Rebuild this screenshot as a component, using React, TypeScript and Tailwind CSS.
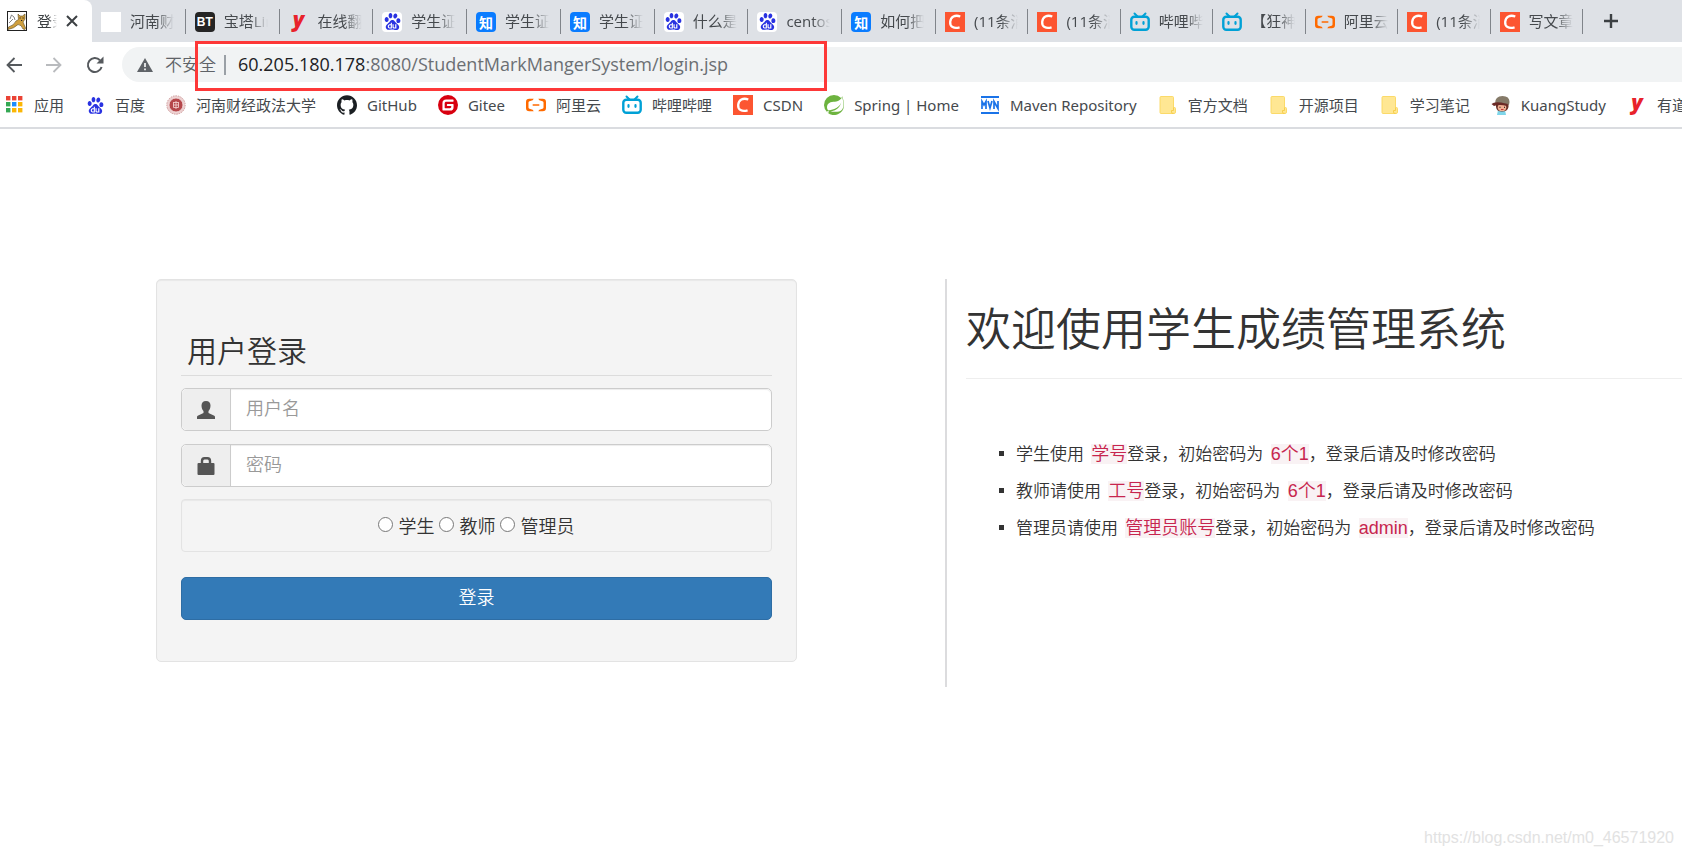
import type { ReactNode } from "react";
import { SiAlibabacloud, SiBaidu, SiGitee, SiGithub, SiSpring } from "react-icons/si";

const sans = "font-['Open_Sans','Noto_Sans_CJK_SC',sans-serif]";

function Tomcat() {
  return (
    <svg viewBox="0 0 20 20" className="size-5" aria-hidden="true">
      <rect x="0.5" y="0.5" width="19" height="19" fill="#fff" stroke="#222" />
      <path d="M3 8 L4.500 4 L7 6 L8 9 M2 12 L6 8" fill="none" stroke="#666" strokeWidth="0.800" />
      <path d="M1 18.500 L1.500 16 Q7 14.500 9 10 L11.500 8.500 L11 3 L13 5 H15.500 L18 3 V8 L16 11 L18.500 17 L18 18.500 L16 18 Q14.500 13.500 11 13.500 Q7 17.500 1 18.500 z" fill="#cf9f3e" stroke="#5c4a20" strokeWidth="0.600" />
      <path d="M12.500 7 h1.200 M15.500 7 h1.200 M14 9.500 h1.200" stroke="#222" />
    </svg>
  );
}

function BaiduTile() {
  return (
    <span className="flex size-5 items-center justify-center rounded-sm bg-white text-[17px] text-[#2932e1]">
      <SiBaidu />
    </span>
  );
}

function Zhihu() {
  return (
    <span className="flex size-5 items-center justify-center rounded-sm bg-[#0a7cff] font-['Noto_Sans_CJK_SC',sans-serif] text-[14px] leading-5 font-bold text-white">
      知
    </span>
  );
}

function Csdn() {
  return (
    <svg viewBox="0 0 20 20" className="size-5" aria-hidden="true">
      <rect width="20" height="20" fill="#fc5531" />
      <path d="M15.300 4.500 C10 2.500 5.600 4.900 5.200 9.800 C4.800 14.800 8.800 17 14.600 15.300" fill="none" stroke="#fff" strokeWidth="2.300" />
    </svg>
  );
}

function Bili() {
  return (
    <svg viewBox="0 0 20 20" className="size-5" fill="none" stroke="#00a1d6" strokeLinecap="round" aria-hidden="true">
      <path d="M4.500 1.500 L7.500 4.500 M15.500 1.500 L12.500 4.500" strokeWidth="2" />
      <rect x="1.300" y="4.800" width="17.400" height="13" rx="3" strokeWidth="2.400" />
      <path d="M6.500 10.200 v1.600 M13.500 10.200 v1.600" strokeWidth="2.200" />
    </svg>
  );
}

function Bt() {
  return (
    <span className="flex size-5 items-center justify-center rounded-sm bg-[#252525] font-['Liberation_Sans',sans-serif] text-[12px] leading-5 font-bold text-white">
      BT
    </span>
  );
}

function Youdao() {
  return (
    <span className="flex size-5 items-center justify-center pb-[6px] font-['Open_Sans',sans-serif] text-[21px] leading-5 font-extrabold text-[#e8222b] italic">
      y
    </span>
  );
}

function Aliyun() {
  return <SiAlibabacloud className="size-5 text-[#ff6a00]" />;
}

function Blank() {
  return <span className="block size-5 bg-white" />;
}

function AppsGrid() {
  const colors = ["#ea4335", "#ea4335", "#ea4335", "#34a853", "#1a8cff", "#fbb605", "#34a853", "#fbb605", "#fbb605"];
  return (
    <svg viewBox="0 0 20 20" className="size-5" aria-hidden="true">
      {colors.map((c, i) => (
        <rect key={i} x={2 + (i % 3) * 6} y={1 + Math.floor(i / 3) * 6} width="4.400" height="4.400" fill={c} />
      ))}
    </svg>
  );
}

function Seal() {
  return (
    <svg viewBox="0 0 20 20" className="size-5" fill="none" aria-hidden="true">
      <circle cx="10" cy="10" r="9.200" fill="#ecd0d0" stroke="#cf9a9a" strokeDasharray="1.500 1" />
      <circle cx="10" cy="10" r="7" fill="#b5474b" stroke="#f6e4e4" strokeWidth="0.800" />
      <path d="M7 7.500 h6 M7.500 7.500 v5 h5 v-5 M7 10 h6 M10 6 v8" stroke="#f2c9c9" strokeWidth="0.900" />
    </svg>
  );
}

function Maven() {
  return (
    <svg viewBox="0 0 20 20" className="size-5" fill="none" stroke="#1a73e8" aria-hidden="true">
      <path d="M1 2 h18 M1 18 h18" strokeWidth="2" />
      <path d="M2 14 V6.500 L4 10 L6 6.500 V14 M8 6 L10 13 L12 6 M14 14 V6.500 L18 13.500 V6" strokeWidth="1.700" />
    </svg>
  );
}

function Folder() {
  return (
    <svg viewBox="0 0 20 20" className="size-5" aria-hidden="true">
      <path d="M3 1.500 h11.500 a1 1 0 0 1 1 1 V12.500 h1 a1 1 0 0 1 1 1 V17 a1.500 1.500 0 0 1 -1.500 1.500 H3 a1 1 0 0 1 -1 -1 V2.500 a1 1 0 0 1 1 -1 z" fill="#ffe793" stroke="#fbd75e" strokeWidth="0.900" />
      <path d="M15.500 12.500 v3 h-2 v1.500 a1.500 1.500 0 0 0 2 1.300" fill="none" stroke="#f5cb45" strokeWidth="0.900" />
    </svg>
  );
}

function Kid() {
  return (
    <svg viewBox="0 0 20 20" className="size-5" aria-hidden="true">
      <path d="M7 15 h7 l1 5 H6 z" fill="#7fd6ea" />
      <path d="M5 9 h12.500 v3 q-1 4.500 -6.500 4.500 T5 12 z" fill="#6b3026" />
      <ellipse cx="11" cy="12.400" rx="4.300" ry="3.600" fill="#f2b093" />
      <path d="M4 8.500 Q4 1 11.500 1 Q18.500 1 18.500 7 L18 10 L9 8 z" fill="#857a68" />
      <path d="M0.500 9 Q3 6.500 10 7.500 L17 9 L16 11 Q8 9 3 11 z" fill="#6b2a26" />
      <path d="M9 11.700 v1.200 M13.500 11.700 v1.200" stroke="#222" />
      <path d="M10 14.500 h2.500" stroke="#c03a3a" />
    </svg>
  );
}

type Item = { icon: ReactNode; label: string };

const wideTabs: Item[] = [
  { icon: <Blank />, label: "河南财经" },
  { icon: <Bt />, label: "宝塔Linux" },
  { icon: <Youdao />, label: "在线翻译" },
  { icon: <BaiduTile />, label: "学生证号" },
  { icon: <Zhihu />, label: "学生证号" },
  { icon: <Zhihu />, label: "学生证号" },
  { icon: <BaiduTile />, label: "什么是证" },
  { icon: <BaiduTile />, label: "centos7" },
  { icon: <Zhihu />, label: "如何把一" },
];

const narrowTabs: Item[] = [
  { icon: <Csdn />, label: "(11条消息" },
  { icon: <Csdn />, label: "(11条消息" },
  { icon: <Bili />, label: "哔哩哔哩" },
  { icon: <Bili />, label: "【狂神说" },
  { icon: <Aliyun />, label: "阿里云登" },
  { icon: <Csdn />, label: "(11条消息" },
  { icon: <Csdn />, label: "写文章-" },
];

const bookmarks: Item[] = [
  { icon: <AppsGrid />, label: "应用" },
  { icon: <BaiduTile />, label: "百度" },
  { icon: <Seal />, label: "河南财经政法大学" },
  { icon: <SiGithub className="size-5 text-[#1b1f23]" />, label: "GitHub" },
  { icon: <SiGitee className="size-5 text-[#d8000f]" />, label: "Gitee" },
  { icon: <Aliyun />, label: "阿里云" },
  { icon: <Bili />, label: "哔哩哔哩" },
  { icon: <Csdn />, label: "CSDN" },
  { icon: <SiSpring className="size-5 text-[#6db33f]" />, label: "Spring | Home" },
  { icon: <Maven />, label: "Maven Repository" },
  { icon: <Folder />, label: "官方文档" },
  { icon: <Folder />, label: "开源项目" },
  { icon: <Folder />, label: "学习笔记" },
  { icon: <Kid />, label: "KuangStudy" },
  { icon: <Youdao />, label: "有道翻译" },
];

function Tab({ icon, label }: Item) {
  return (
    <button type="button" className="flex h-[25px] min-w-0 items-center gap-[9px] border-r border-[#80848a] pr-2 pl-[9px] text-left">
      <span className="shrink-0">{icon}</span>
      <span className="w-11 overflow-hidden pb-px text-[15px] leading-6 whitespace-nowrap text-[#45494d] [mask-image:linear-gradient(to_right,#000_60%,transparent)]">
        {label}
      </span>
    </button>
  );
}

function TabStrip() {
  return (
    <div className="flex h-[42px] items-start bg-[#dee1e6]">
      <div className="flex h-[42px] w-[92px] shrink-0 items-center rounded-tr-lg bg-white pl-[7px]">
        <Tomcat />
        <span className="ml-[10px] w-5 overflow-hidden text-[15px] leading-6 whitespace-nowrap text-[#3c4043] [mask-image:linear-gradient(to_right,#000_60%,transparent)]">
          登录
        </span>
        <button type="button" aria-label="关闭标签页" className="ml-[9px]">
          <svg viewBox="0 0 12 12" className="size-3" fill="none" stroke="#3c4043" strokeWidth="2">
            <path d="M1 1 L11 11 M11 1 L1 11" />
          </svg>
        </button>
      </div>
      <div className="grid w-[844px] grid-cols-9 pt-[9px]">
        {wideTabs.map((t, i) => (
          <Tab key={i} {...t} />
        ))}
      </div>
      <div className="grid w-[647px] grid-cols-7 pt-[9px]">
        {narrowTabs.map((t, i) => (
          <Tab key={i} {...t} />
        ))}
      </div>
      <button type="button" aria-label="新标签页" className="flex h-[42px] items-center pl-5">
        <svg viewBox="0 0 16 16" className="size-4" stroke="#3c4043" strokeWidth="2.400">
          <path d="M8 1 V15 M1 8 H15" />
        </svg>
      </button>
    </div>
  );
}

function Toolbar() {
  return (
    <div className="relative flex h-[45px] items-center">
      <div className="flex w-[122px] shrink-0 items-center gap-6 pl-[6px]">
        <button type="button" aria-label="后退">
          <svg viewBox="0 0 16 16" className="size-4" fill="none" stroke="#55595d" strokeWidth="1.800">
            <path d="M16 8 H1.500 M8.500 1 L1.500 8 L8.500 15" />
          </svg>
        </button>
        <button type="button" aria-label="前进">
          <svg viewBox="0 0 16 16" className="size-4" fill="none" stroke="#b9bbbe" strokeWidth="1.800">
            <path d="M0 8 H14.500 M7.500 1 L14.500 8 L7.500 15" />
          </svg>
        </button>
        <button type="button" aria-label="重新加载">
          <svg viewBox="0 0 18 18" className="size-[18px]" fill="none" stroke="#55595d" strokeWidth="2">
            <path d="M15.600 11 A7 7 0 1 1 14 4.200" />
            <path d="M17.500 0.500 V7.500 H10.500 z" fill="#55595d" stroke="none" />
          </svg>
        </button>
      </div>
      <div className="flex h-[35px] flex-1 items-center rounded-l-full bg-[#f1f3f4] pl-[15px]">
        <svg viewBox="0 0 16 14" className="h-[14px] w-4" aria-hidden="true">
          <path d="M8 0 L16 14 H0 z" fill="#5f6368" />
          <path d="M8 5 V9 M8 10.500 V12.200" stroke="#fff" strokeWidth="1.600" />
        </svg>
        <span className="ml-3 text-[17px] font-[350] text-[#5f6368]">不安全</span>
        <span className="mr-3 ml-2 h-5 w-[2px] bg-[#9aa0a6]" />
        <p className="text-[18px] whitespace-nowrap text-[#6b6f73]">
          <span className="text-[#202124]">60.205.180.178</span>:8080/StudentMarkMangerSystem/login.jsp
        </p>
      </div>
      <div className="absolute -top-px left-[195px] h-[50px] w-[632px] border-3 border-[#fd3838]" />
    </div>
  );
}

function Bookmarks() {
  return (
    <nav className="flex h-[42px] items-center gap-[21px] overflow-hidden border-b-2 border-[#dadce0] pb-1 pl-1 font-['Noto_Sans','Noto_Sans_CJK_SC',sans-serif]">
      {bookmarks.map((b, i) => (
        <a key={i} href="#" className="flex shrink-0 items-center gap-[10px] text-[15px] leading-5 whitespace-nowrap text-[#45494d]">
          {b.icon}
          {b.label}
        </a>
      ))}
    </nav>
  );
}

function Field({ id, type, placeholder, icon }: { id: string; type: string; placeholder: string; icon: ReactNode }) {
  return (
    <div className="mb-[13px] flex h-[43px] rounded-[5px] border border-[#ccc] bg-white">
      <label htmlFor={id} aria-label={placeholder} className="flex w-[49px] shrink-0 items-center justify-center rounded-l-[5px] border-r border-[#ccc] bg-[#eee] text-[#555]">
        {icon}
      </label>
      <input
        id={id}
        type={type}
        placeholder={placeholder}
        className="min-w-0 flex-1 rounded-r-[5px] bg-white px-[15px] pb-[2px] text-[18px] font-[350] text-[#555] shadow-[inset_0_1px_1px_rgba(0,0,0,0.075)] outline-none placeholder:text-[#999]"
      />
    </div>
  );
}

function LoginForm() {
  return (
    <form className="h-[383px] w-[42%] shrink-0 rounded-[5px] border border-[#e3e3e3] bg-[#f4f4f4] px-6 pt-[48px] shadow-[inset_0_1px_1px_rgba(0,0,0,0.05)]">
      <h2 className="mb-3 border-b border-[#dcdcdc] pt-px pb-[3px] pl-[6px] text-[30px] leading-[43px] font-[350]">用户登录</h2>
      <Field
        id="username"
        type="text"
        placeholder="用户名"
        icon={
          <svg viewBox="0 0 18 18" className="size-[18px]" fill="currentColor" aria-hidden="true">
            <path d="M9 0 C12 0 13.500 2 13.500 4.500 C13.500 7 12.700 8.800 11.500 10 V12 L17.300 14.800 Q18 15.200 18 16 V18 H0 V16 Q0 15.200 0.700 14.800 L6.500 12 V10 C5.300 8.800 4.500 7 4.500 4.500 C4.500 2 6 0 9 0 z" />
          </svg>
        }
      />
      <Field
        id="password"
        type="password"
        placeholder="密码"
        icon={
          <svg viewBox="0 0 18 18" className="size-[18px]" aria-hidden="true">
            <path d="M5 7 V4 Q5 1.200 7.500 1.200 H10.500 Q13 1.200 13 4 V7" fill="none" stroke="currentColor" strokeWidth="2.400" />
            <rect x="0.500" y="6" width="17" height="12" rx="1" fill="currentColor" />
          </svg>
        }
      />
      <div className="-mt-px flex h-[53px] items-center justify-center gap-[5px] rounded-[4px] border border-[#e3e3e3] pt-[2px] text-[18px] font-[350] shadow-[inset_0_1px_1px_rgba(0,0,0,0.05)]">
        {["学生", "教师", "管理员"].map((r) => (
          <label key={r} className="flex items-center gap-[5px]">
            <input type="radio" name="role" className="mb-1 size-[15px]" />
            {r}
          </label>
        ))}
      </div>
      <button type="button" className="mt-[25px] h-[43px] w-full rounded-[5px] border border-[#2e6da4] bg-[#337ab7] pb-[2px] text-[18px] font-[350] text-white">
        登录
      </button>
    </form>
  );
}

function Code({ children }: { children: ReactNode }) {
  return (
    <code className="ml-[3px] bg-[#f9f2f4] font-['Liberation_Sans','Noto_Sans_CJK_SC',sans-serif] text-[18px] leading-none text-[#c7254e]">
      {children}
    </code>
  );
}

function Welcome() {
  return (
    <section className="ml-[148px] h-[408px] min-w-0 flex-1 border-l-2 border-[#dcdcde] pl-[19px]">
      <h1 className="border-b border-[#eee] pt-[25px] pb-6 text-[45px] leading-[50px] font-[350] whitespace-nowrap">
        欢迎使用学生成绩管理系统
      </h1>
      <ul className="mt-14 list-none pl-[33px] text-[17px] leading-[37px] font-[350] whitespace-nowrap">
        <li className="flex items-center gap-3 before:size-[5px] before:bg-[#333]">
          <p>学生使用 <Code>学号</Code>登录，初始密码为 <Code>6个1</Code>，登录后请及时修改密码</p>
        </li>
        <li className="flex items-center gap-3 before:size-[5px] before:bg-[#333]">
          <p>教师请使用 <Code>工号</Code>登录，初始密码为 <Code>6个1</Code>，登录后请及时修改密码</p>
        </li>
        <li className="flex items-center gap-3 before:size-[5px] before:bg-[#333]">
          <p>管理员请使用 <Code>管理员账号</Code>登录，初始密码为 <Code>admin</Code>，登录后请及时修改密码</p>
        </li>
      </ul>
    </section>
  );
}

export default function App() {
  return (
    <div lang="zh-CN" className={`${sans} relative min-h-screen overflow-hidden bg-white text-[#333]`}>
      <TabStrip />
      <Toolbar />
      <Bookmarks />
      <main className="flex pt-[150px] pl-[156px]">
        <LoginForm />
        <Welcome />
      </main>
      <p className="absolute right-2 bottom-[6px] font-['Liberation_Sans',sans-serif] text-[16px] text-[#e2e2e2]">
        https://blog.csdn.net/m0_46571920
      </p>
    </div>
  );
}
